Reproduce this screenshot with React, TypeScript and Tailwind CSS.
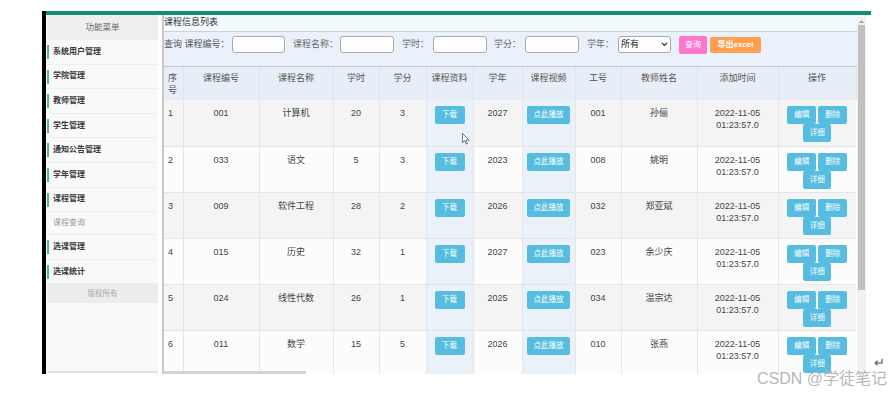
import React from "react";

type Course = {
  id: number;
  code: string;
  name: string;
  hours: number;
  credit: number;
  year: number;
  no: string;
  teacher: string;
};

const courses: Course[] = [
  { id: 1, code: "001", name: "计算机", hours: 20, credit: 3, year: 2027, no: "001", teacher: "孙俪" },
  { id: 2, code: "033", name: "语文", hours: 5, credit: 3, year: 2023, no: "008", teacher: "姚明" },
  { id: 3, code: "009", name: "软件工程", hours: 28, credit: 2, year: 2026, no: "032", teacher: "郑亚斌" },
  { id: 4, code: "015", name: "历史", hours: 32, credit: 1, year: 2027, no: "023", teacher: "余少庆" },
  { id: 5, code: "024", name: "线性代数", hours: 26, credit: 1, year: 2025, no: "034", teacher: "温宗达" },
  { id: 6, code: "011", name: "数学", hours: 15, credit: 5, year: 2026, no: "010", teacher: "张燕" },
];

const menu = ["系统用户管理", "学院管理", "教师管理", "学生管理", "通知公告管理", "学年管理", "课程管理"];

// 列宽 (px)
const colWidths = [19, 76, 74, 46, 47, 47, 49, 53, 46, 76, 81, 78];
const headers = ["序号", "课程编号", "课程名称", "学时", "学分", "课程资料", "学年", "课程视频", "工号", "教师姓名", "添加时间", "操作"];

function InfoBtn({ label, w }: { label: string; w: string }) {
  return (
    <span
      className={`inline-flex items-center justify-center h-[18px] ${w} rounded-[2px] bg-[#56bde0] text-white text-[7.5px] leading-none align-top`}
    >
      {label}
    </span>
  );
}

function MenuItem({ label }: { label: string }) {
  return (
    <div className="relative h-[24.6px] flex items-center pl-[6px] border-b border-[#efefef] text-[8px] font-bold text-[#3a3a3a]">
      <span className="absolute left-0 top-[5px] w-[2px] h-[14px] bg-[#4dbb8f]" />
      {label}
    </div>
  );
}

export default function App() {
  return (
    <div className="relative w-[891px] h-[394px] overflow-hidden bg-white font-['Liberation_Sans','Noto_Sans_CJK_SC',sans-serif]">
      <div className="flex pt-[11px] pl-[42px]">
        <div className="w-[4px] h-[363px] bg-black" />
        <div className="flex flex-col">
          <div className="w-[825px] h-[4px] bg-[#12906f]" />
          <div className="flex h-[359px]">
            {/* 功能菜单 */}
            <div className="ml-[1px] w-[111px] h-[358px] flex flex-col bg-[#f9f9f9] border-b-2 border-[#e2e2e2]">
              <div className="h-[25px] flex items-center justify-center bg-[#eeeeee] text-[8.5px] text-[#666]">
                功能菜单
              </div>
              {menu.map((m) => (
                <MenuItem key={m} label={m} />
              ))}
              <div className="h-[23px] flex items-center pl-[6px] border-b border-[#efefef] text-[8px] text-[#999]">
                课程查询
              </div>
              <MenuItem label="选课管理" />
              <MenuItem label="选课统计" />
              <div className="h-[19px] flex items-center justify-center bg-[#ececec] text-[7.5px] text-[#aaa]">
                版权所有
              </div>
            </div>
            <div className="w-[4px]" />
            <div className="w-[2px] bg-[#c8c8c8]" />

            {/* 主内容 */}
            <div className="relative w-[693px] overflow-hidden text-[9px] text-[#444]">
              <div className="h-[17px] flex items-center bg-[#f3fafd] border-b border-[#c9d3de] text-[#333]">
                课程信息列表
              </div>
              <div className="h-[35px] flex items-start pt-[4px] bg-[#eaf1fa] border-b border-[#c3ccd6] text-[#555]">
                <span className="w-[68px] leading-[17px]">查询 课程编号：</span>
                <span className="w-[53px] h-[17px] rounded-[3px] border border-[#a9a9a9] bg-white" />
                <span className="w-[55px] pl-[8px] leading-[17px] text-[#666]">课程名称：</span>
                <span className="w-[54px] h-[17px] rounded-[3px] border border-[#a9a9a9] bg-white" />
                <span className="w-[39px] pl-[8px] leading-[17px] text-[#666]">学时：</span>
                <span className="w-[54px] h-[17px] rounded-[3px] border border-[#a9a9a9] bg-white" />
                <span className="w-[38px] pl-[7px] leading-[17px] text-[#666]">学分：</span>
                <span className="w-[54px] h-[17px] rounded-[3px] border border-[#a9a9a9] bg-white" />
                <span className="w-[39px] pl-[8px] leading-[17px] text-[#666]">学年：</span>
                <span className="w-[53px] h-[17px] flex items-center justify-between px-[2px] rounded-[3px] border border-[#a9a9a9] bg-white text-[#222]">
                  所有
                  <svg width="7" height="5" viewBox="0 0 7 5">
                    <path d="M1 1l2.5 2.5L6 1" fill="none" stroke="#333" strokeWidth="1.2" />
                  </svg>
                </span>
                <span className="ml-[8px] w-[28px] h-[18px] flex items-center justify-center rounded-[2px] bg-[#ff76cd] text-white text-[8px]">
                  查询
                </span>
                <span className="ml-[3px] mt-[1px] w-[51px] h-[16px] flex items-center justify-center rounded-[2px] bg-[#ff9f4f] text-white text-[8px] font-bold">
                  导出excel
                </span>
              </div>

              <table className="table-fixed border-collapse w-[692px]">
                <colgroup>
                  {colWidths.map((w, i) => (
                    <col key={i} style={{ width: w }} />
                  ))}
                </colgroup>
                <thead>
                  <tr className="h-[33px] bg-[#e8eef7] text-[#555]">
                    {headers.map((h, i) => (
                      <th
                        key={h}
                        className={`align-top pt-[5px] font-normal leading-[12px] border-r border-[#dde3ea] ${
                          i === 0 ? "text-left pl-[4px] pr-[3px]" : "text-center"
                        }`}
                      >
                        {h}
                      </th>
                    ))}
                  </tr>
                </thead>
                <tbody>
                  {courses.map((c, idx) => {
                    const bg = idx % 2 === 0 ? "bg-[#f4f4f4]" : "bg-[#fcfcfc]";
                    const td = `align-top pt-[7px] leading-[12px] text-center border-r border-b border-[#e6e6e6] ${bg}`;
                    const hl = "align-top pt-[6px] text-center border-r border-b border-[#e6e6e6] bg-[#eaf1f9]";
                    return (
                      <tr key={c.id} className="h-[46px]">
                        <td className={`align-top pt-[7px] pl-[4px] leading-[12px] text-left border-r border-b border-[#e6e6e6] ${bg}`}>
                          {c.id}
                        </td>
                        <td className={td}>{c.code}</td>
                        <td className={td}>{c.name}</td>
                        <td className={td}>{c.hours}</td>
                        <td className={td}>{c.credit}</td>
                        <td className={hl}>
                          <InfoBtn label="下载" w="w-[30px]" />
                        </td>
                        <td className={td}>{c.year}</td>
                        <td className={hl}>
                          <InfoBtn label="点此播放" w="w-[43px]" />
                        </td>
                        <td className={td}>{c.no}</td>
                        <td className={td}>{c.teacher}</td>
                        <td className={td}>
                          2022-11-05
                          <br />
                          01:23:57.0
                        </td>
                        <td className={`align-top pt-[6px] border-b border-[#e6e6e6] ${bg}`}>
                          <div className="flex flex-wrap justify-center gap-x-[2px] px-[8px]">
                            <InfoBtn label="编辑" w="w-[29px]" />
                            <InfoBtn label="删除" w="w-[29px]" />
                            <InfoBtn label="详细" w="w-[28px]" />
                          </div>
                        </td>
                      </tr>
                    );
                  })}
                </tbody>
              </table>

              {/* 横向滚动条 */}
              <div className="absolute left-0 bottom-0 w-[142px] h-[3px] bg-[#d4d4d4]" />
              {/* 鼠标指针 */}
              <svg className="absolute left-[298px] top-[118px]" width="8" height="12" viewBox="0 0 8 12">
                <path d="M0.5 0.5v9l2.2-2 1.6 3.6 1.3-.6-1.6-3.5h3z" fill="#fff" stroke="#555" strokeWidth="0.8" />
              </svg>
            </div>

            {/* 纵向滚动条 */}
            <div className="w-[9px] h-[357px] mt-[2px] flex flex-col bg-[#f1f1f1]">
              <div className="h-[8px] flex items-center justify-center">
                <svg width="5" height="3" viewBox="0 0 5 3">
                  <path d="M0 3L2.5 0L5 3z" fill="#a3a3a3" />
                </svg>
              </div>
              <div className="h-[265px] mx-[1px] bg-[#c1c1c1]" />
            </div>
          </div>
        </div>
      </div>

      {/* 水印 */}
      <span className="absolute left-[874px] top-[356px] text-[13px] leading-[13px] text-[#555]">↵</span>
      <span className="absolute left-[757px] top-[370px] text-[16px] leading-[18px] text-[#b8b8b8]">
        CSDN @学徒笔记
      </span>
    </div>
  );
}
